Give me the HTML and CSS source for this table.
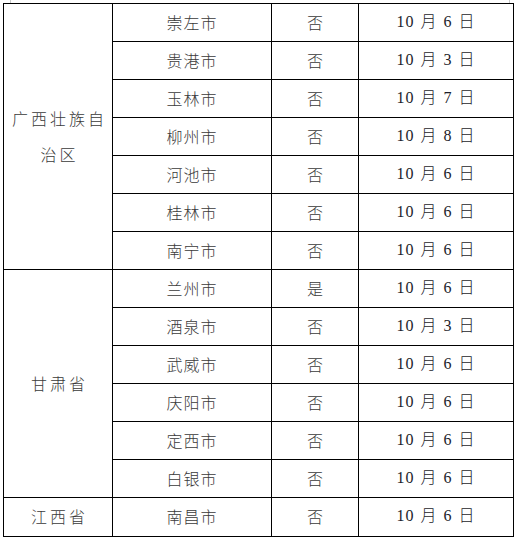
FILE: index.html
```html
<!DOCTYPE html>
<html lang="zh-CN">
<head>
<meta charset="utf-8">
<link rel="stylesheet" href="styles.css">
</head>
<body>
<div class="page">
<span class="mark mark-l"></span><span class="mark mark-r"></span>
<table class="grid">
<colgroup><col class="c1"><col class="c2"><col class="c3"><col class="c4"></colgroup>
<tbody>
<tr><td class="prov" rowspan="7">广西壮族自治区</td><td class="city">崇左市</td><td class="yn">否</td><td class="date">10 月 6 日</td></tr>
<tr><td class="city">贵港市</td><td class="yn">否</td><td class="date">10 月 3 日</td></tr>
<tr><td class="city">玉林市</td><td class="yn">否</td><td class="date">10 月 7 日</td></tr>
<tr><td class="city">柳州市</td><td class="yn">否</td><td class="date">10 月 8 日</td></tr>
<tr><td class="city">河池市</td><td class="yn">否</td><td class="date">10 月 6 日</td></tr>
<tr><td class="city">桂林市</td><td class="yn">否</td><td class="date">10 月 6 日</td></tr>
<tr><td class="city">南宁市</td><td class="yn">否</td><td class="date">10 月 6 日</td></tr>
<tr><td class="prov" rowspan="6">甘肃省</td><td class="city">兰州市</td><td class="yn">是</td><td class="date">10 月 6 日</td></tr>
<tr><td class="city">酒泉市</td><td class="yn">否</td><td class="date">10 月 3 日</td></tr>
<tr><td class="city">武威市</td><td class="yn">否</td><td class="date">10 月 6 日</td></tr>
<tr><td class="city">庆阳市</td><td class="yn">否</td><td class="date">10 月 6 日</td></tr>
<tr><td class="city">定西市</td><td class="yn">否</td><td class="date">10 月 6 日</td></tr>
<tr><td class="city">白银市</td><td class="yn">否</td><td class="date">10 月 6 日</td></tr>
<tr><td class="prov">江西省</td><td class="city">南昌市</td><td class="yn">否</td><td class="date">10 月 6 日</td></tr>
</tbody>
</table>
</div>
</body>
</html>
```
FILE: styles.css
```css
html, body {
  margin: 0;
  padding: 0;
  background: #ffffff;
}
.page {
  position: relative;
  padding: 3px 0 0 3px;
  width: 517px;
  height: 540px;
  box-sizing: border-box;
}
.mark {
  position: absolute;
  top: 0;
  width: 1px;
  height: 3px;
  background: #c8c8c8;
}
.mark-l { left: 10px; }
.mark-r { left: 509px; }
.grid {
  border-collapse: collapse;
  table-layout: fixed;
  width: 510px;
  font-family: "Noto Sans CJK SC", sans-serif;
  font-size: 16px;
  font-weight: 300;
  color: #3a3a3a;
}
.c1 { width: 109px; }
.c2 { width: 159px; }
.c3 { width: 87px; }
.c4 { width: 155px; }
.grid td {
  border: 1px solid #000000;
  height: 35px;
  padding: 0 0 2px 0;
  text-align: center;
  vertical-align: middle;
  line-height: 20px;
}
.grid .prov {
  letter-spacing: 3px;
  padding: 0 4px 2px 7px;
  line-height: 36px;
}
.grid .city {
  letter-spacing: 1px;
}
.grid .date {
  font-family: "Liberation Serif", "Noto Sans CJK SC", serif;
  font-weight: 300;
  color: #1c1c2a;
  letter-spacing: 1px;
  word-spacing: 1px;
  font-size: 16px;
}
```
